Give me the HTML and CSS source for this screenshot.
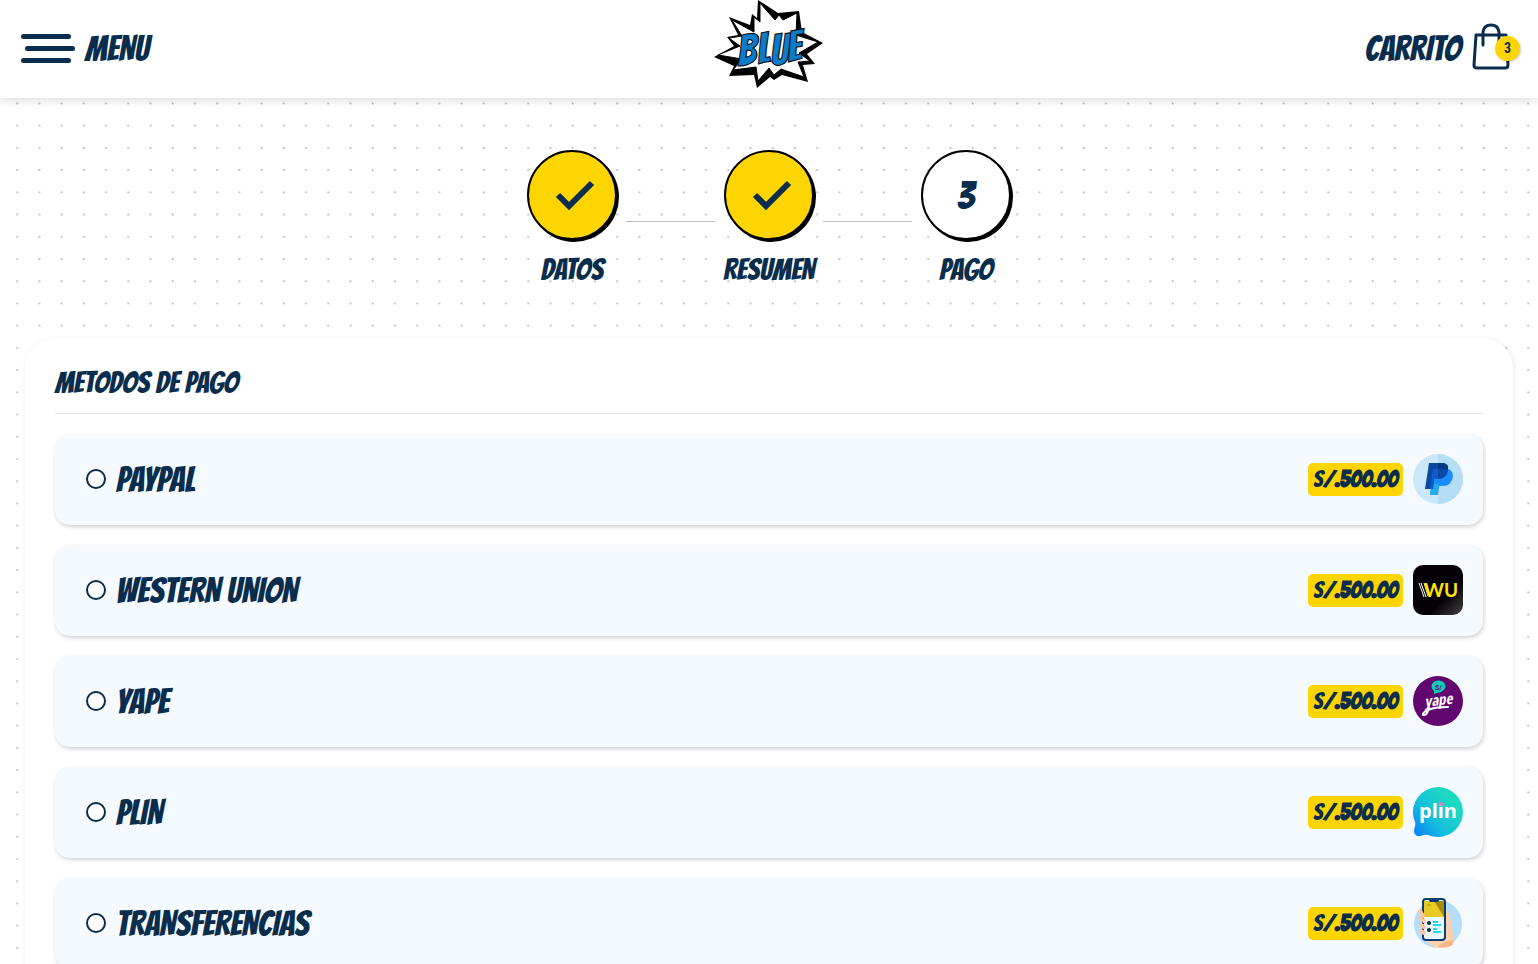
FILE: index.html
```html
<!DOCTYPE html>
<html lang="es">
<head>
    <meta charset="UTF-8">
    <meta name="viewport" content="width=device-width, initial-scale=1.0">
    <title>Metodos de pago</title>
    <link rel="stylesheet" href="styles.css">
</head>
<body>

<header class="header">
    <button class="menu-btn" type="button">
        <span class="menu-bars"><span></span><span></span><span></span></span>
        MENU
    </button>
    <a class="logo" href="#" aria-label="Blue">
        <svg width="110" height="90" viewBox="0 0 110 90">
            <path d="M44 0L64 13L85 11L88 32L109 43L93 54L101 64L89 65L94 82L68 75L60 80L56 77L43 88L40 75L15 76L20 66L0 57L20 46L13 37L24 35L15 17L36 25L38 14L43 18Z" fill="#000"/>
            <path d="M46 3L61 20L65 15L69 20L83 13L82 35L104 42L85 53L96 61L84 62L90 77L67 69L60 75L55 68L44 81L42 67L19 70L28 59L4 55L26 46L15 38L28 36L18 20L40 32L40 17L46 22Z" fill="#fff" stroke="#000" stroke-width="1"/>
            <g class="logo-text">
                <text x="24" y="66" transform="rotate(-3 24 66)">B</text>
                <text x="44" y="64" transform="rotate(-5 44 64)">L</text>
                <text x="57" y="65" transform="rotate(-3 57 65)">U</text>
                <text x="74" y="62" transform="rotate(-6 74 62)">E</text>
            </g>
        </svg>
    </a>
    <a class="cart" href="#">
        CARRITO
        <span class="cart-icon">
            <svg width="38" height="48" viewBox="0 0 38 48" fill="none" stroke="#0a2d4d" stroke-width="3" stroke-linecap="round" stroke-linejoin="round">
                <path d="M4 12H34L36 42Q36 45 33 45H5Q2 45 2 42Z"/>
                <path d="M11 22V9Q12 2 19 2T27 9V22"/>
            </svg>
            <span class="cart-count">3</span>
        </span>
    </a>
</header>

<main>
    <ol class="steps">
        <li class="step done">
            <span class="circle"><svg width="40" height="30" viewBox="0 0 40 30"><path d="M3 15L14 26L37 3" fill="none" stroke="#0a2d4d" stroke-width="6"/></svg></span>
            <span class="step-name">DATOS</span>
        </li>
        <li class="line"></li>
        <li class="step done">
            <span class="circle"><svg width="40" height="30" viewBox="0 0 40 30"><path d="M3 15L14 26L37 3" fill="none" stroke="#0a2d4d" stroke-width="6"/></svg></span>
            <span class="step-name">RESUMEN</span>
        </li>
        <li class="line"></li>
        <li class="step">
            <span class="circle">3</span>
            <span class="step-name">PAGO</span>
        </li>
    </ol>

    <section class="card">
        <h1>METODOS DE PAGO</h1>

        <div class="options">
            <label class="option">
                <input type="radio" name="pago" value="paypal">
                <span class="name">PAYPAL</span>
                <span class="price">S/<b>.500.00</b></span>
                <svg width="50" height="50" viewBox="0 0 50 50">
                    <circle cx="25" cy="25" r="25" fill="#cae8f9"/>
                    <path d="M25 0A25 25 0 0 1 25 50Z" fill="#b5def5"/>
                    <path d="M20 14H33Q40 16 40 22Q39 32 29 32H26L25 41H17Z" fill="#1a8cff"/>
                    <path d="M19 30H25V41H17Z" fill="#20ade8"/>
                    <path d="M16 9H30Q36 10 35 16Q34 25 24 25H21L20 35H12Z" fill="#0849a2"/>
                    <path d="M25 9H30Q36 10 35 15H25Z" fill="#083a83"/>
                    <path d="M20 15H35Q34 25 24 25H21L20 35H17Z" fill="#1259cb"/>
                    <path d="M25 15H35Q34 24 25 25Z" fill="#0a48a5"/>
                </svg>
            </label>

            <label class="option">
                <input type="radio" name="pago" value="western">
                <span class="name">WESTERN UNION</span>
                <span class="price">S/<b>.500.00</b></span>
                <svg width="50" height="50" viewBox="0 0 50 50">
                    <defs>
                        <linearGradient id="wu" x1="0" y1="0" x2="1" y2="1">
                            <stop offset="0.65" stop-color="#050006"/>
                            <stop offset="1" stop-color="#454345"/>
                        </linearGradient>
                    </defs>
                    <rect width="50" height="50" rx="10" fill="url(#wu)"/>
                    <path d="M6 18L11 32M8 18L13 32M11 18L15 31" stroke="#fff" stroke-width="1"/>
                    <text class="wu-text" x="11" y="32">WU</text>
                </svg>
            </label>

            <label class="option">
                <input type="radio" name="pago" value="yape">
                <span class="name">YAPE</span>
                <span class="price">S/<b>.500.00</b></span>
                <svg width="50" height="50" viewBox="0 0 50 50">
                    <circle cx="25" cy="25" r="25" fill="#62066f"/>
                    <path d="M21 18V15A7 6 0 1 1 28 16L24 17Z" fill="#0fcab4"/>
                    <text class="yape-sol" x="22" y="14">S/</text>
                    <text class="yape-text" x="12" y="31" transform="rotate(-7 12 31)">yape</text>
                    <path d="M16 30Q15 40 10 39Q9 37 15 34Q21 31 35 31" fill="none" stroke="#fff" stroke-width="2" stroke-linecap="round"/>
                </svg>
            </label>

            <label class="option">
                <input type="radio" name="pago" value="plin">
                <span class="name">PLIN</span>
                <span class="price">S/<b>.500.00</b></span>
                <svg width="50" height="50" viewBox="0 0 50 50">
                    <defs>
                        <linearGradient id="plin" x1="0" y1="1" x2="0.8" y2="0.3">
                            <stop offset="0" stop-color="#087aff"/>
                            <stop offset="0.5" stop-color="#14bfdc"/>
                            <stop offset="1" stop-color="#1ed9c2"/>
                        </linearGradient>
                    </defs>
                    <path d="M25 0A25 25 0 1 1 25 50Q20 50 15 48Q11 47 8 49Q2 50 1 45Q1 42 2 39Q3 36 1 32A25 25 0 0 1 25 0Z" fill="url(#plin)"/>
                    <text class="plin-text" x="6" y="31">plin</text>
                    <circle cx="28" cy="17" r="2" fill="#ee77c5"/>
                </svg>
            </label>

            <label class="option">
                <input type="radio" name="pago" value="transferencias">
                <span class="name">TRANSFERENCIAS</span>
                <span class="price">S/<b>.500.00</b></span>
                <svg width="50" height="50" viewBox="0 0 50 50">
                    <circle cx="25" cy="26" r="24" fill="#b5defe"/>
                    <path d="M32 11Q37 13 38 24L40 35V47Q26 54 17 46Q8 40 9 31L14 36L32 31Z" fill="#fcd0ac"/>
                    <path d="M40 42V46Q35 50 25 49Q27 45 40 42Z" fill="#f9b58a"/>
                    <rect x="10" y="1" width="22" height="41" rx="3" fill="#e8f8fb" stroke="#083d73" stroke-width="2"/>
                    <path d="M11 3H31V19H11Z" fill="#e8ca24"/>
                    <path d="M21 3H31V19Z" fill="#a98d06"/>
                    <path d="M15 1H27L25 4H17Z" fill="#083d73"/>
                    <path d="M14 7H18" stroke="#a98d06" stroke-width="1"/>
                    <path d="M7 13L10 18M7 20L11 23M8 27L11 29M8 33L11 35" stroke="#fcc7a2" stroke-width="4" stroke-linecap="round"/>
                    <circle cx="16" cy="25" r="2" fill="#072c50"/>
                    <circle cx="16" cy="32" r="2" fill="#072c50"/>
                    <path d="M20 24H25M20 27H28M20 31H24M20 34H28" stroke="#20d9eb" stroke-width="2"/>
                </svg>
            </label>
        </div>
    </section>
</main>

</body>
</html>
```

FILE: styles.css
```css
* {
    box-sizing: border-box;
}
body {
    margin: 0;
    color: #0a2d4d;
    font-family: Bangers, "Roboto Condensed", sans-serif;
    background: #fff url("data:image/svg+xml,%3Csvg xmlns='http://www.w3.org/2000/svg' width='200' height='200' viewBox='0 0 900 900'%3E%3Cpattern id='p' width='100' height='100' patternUnits='userSpaceOnUse'%3E%3Crect x='73' y='63' width='8' height='5' fill='%23888'/%3E%3C/pattern%3E%3Crect width='900' height='900' fill='url(%23p)'/%3E%3C/svg%3E");
}
a {
    color: inherit;
    text-decoration: none;
}
.header {
    display: grid;
    grid-template-columns: 1fr auto 1fr;
    align-items: center;
    height: 98px;
    padding: 0 28px 2px 21px;
    background-color: #fff;
    box-shadow: 0 2px 10px rgba(0, 0, 0, 0.15);
    font-size: 35px;
}
.menu-btn {
    display: flex;
    align-items: center;
    justify-self: start;
    gap: 10px;
    padding: 0;
    border: none;
    background: none;
    color: inherit;
    font: inherit;
    cursor: pointer;
}
.menu-bars {
    display: grid;
    gap: 7px;
    width: 54px;
}
.menu-bars span {
    width: 50px;
    height: 5px;
    border-radius: 3px;
    background-color: #0a2d4d;
}
.menu-bars span:nth-child(2) {
    justify-self: end;
}
.logo {
    align-self: start;
    padding-left: 6px;
}
.logo svg {
    display: block;
}
.logo-text {
    font-size: 43px;
    fill: #0b7cc8;
    stroke: #000;
    stroke-width: 1px;
}
.cart {
    display: flex;
    align-items: center;
    justify-self: end;
    gap: 11px;
}
.cart-icon {
    position: relative;
    margin-bottom: 2px;
}
.cart-icon svg {
    display: block;
}
.cart-count {
    position: absolute;
    top: 13px;
    right: -10px;
    width: 25px;
    height: 25px;
    border-radius: 50%;
    background-color: #ffd500;
    box-shadow: 1px 1px 2px rgba(0, 0, 0, 0.2);
    font: bold 14px/25px "Roboto Condensed", Roboto, sans-serif;
    text-align: center;
}
.steps {
    display: flex;
    justify-content: center;
    gap: 9px;
    margin: 0;
    padding: 52px 0 50px;
    list-style: none;
}
.step {
    display: flex;
    flex-direction: column;
    align-items: center;
    width: 90px;
}
.circle {
    display: flex;
    align-items: center;
    justify-content: center;
    width: 90px;
    height: 90px;
    border: 2px solid #000;
    border-radius: 50%;
    background-color: #fff;
    box-shadow: 2px 2px 0 #000;
    font-size: 38px;
}
.circle svg {
    margin-left: 6px;
}
.done .circle {
    background-color: #ffd500;
}
.step-name {
    margin-top: 12px;
    font-size: 30px;
    line-height: 36px;
    white-space: nowrap;
}
.line {
    width: 89px;
    height: 1px;
    margin-top: 71px;
    background-color: #b8bcbf;
}
.card {
    margin: 0 25px 25px;
    padding: 30px;
    border-radius: 30px;
    background-color: #fff;
    box-shadow: 1px 1px 5px rgba(0, 0, 0, 0.1);
}
h1 {
    margin: 0 0 20px;
    padding-bottom: 15px;
    border-bottom: 1px solid #e2e4e6;
    font-size: 30px;
    font-weight: normal;
    line-height: 30px;
}
.options {
    display: grid;
    gap: 20px;
}
.option {
    display: flex;
    align-items: center;
    gap: 10px;
    min-height: 91px;
    padding: 20px 20px 21px 31px;
    border-radius: 15px;
    background-color: #f5faff;
    box-shadow: 1px 2px 4px rgba(0, 0, 0, 0.18);
    cursor: pointer;
}
.option input {
    appearance: none;
    width: 20px;
    height: 20px;
    margin: 0;
    border: 2px solid #0a2d4d;
    border-radius: 50%;
    background-color: #fff;
}
.option input:checked {
    background-color: #ffd500;
}
.name {
    flex: 1;
    font-size: 35px;
}
.price {
    padding: 0 5px;
    border-radius: 5px;
    background-color: #ffd500;
    font-size: 23px;
    line-height: 33px;
}
.wu-text {
    font: bold 19px Lato, sans-serif;
    fill: #ffe600;
}
.yape-sol {
    font: bold 7px Roboto, sans-serif;
    fill: #62066f;
}
.yape-text {
    font: italic bold 15px "Open Sans Condensed", sans-serif;
    fill: #fff;
}
.plin-text {
    font: bold 20px "Open Sans", sans-serif;
    fill: #fff;
}
@media (max-width: 600px) {
    .header {
        font-size: 24px;
    }
    .card {
        margin: 0 10px 10px;
        padding: 15px;
    }
    .line {
        width: 20px;
    }
    .name {
        font-size: 24px;
    }
}
```
